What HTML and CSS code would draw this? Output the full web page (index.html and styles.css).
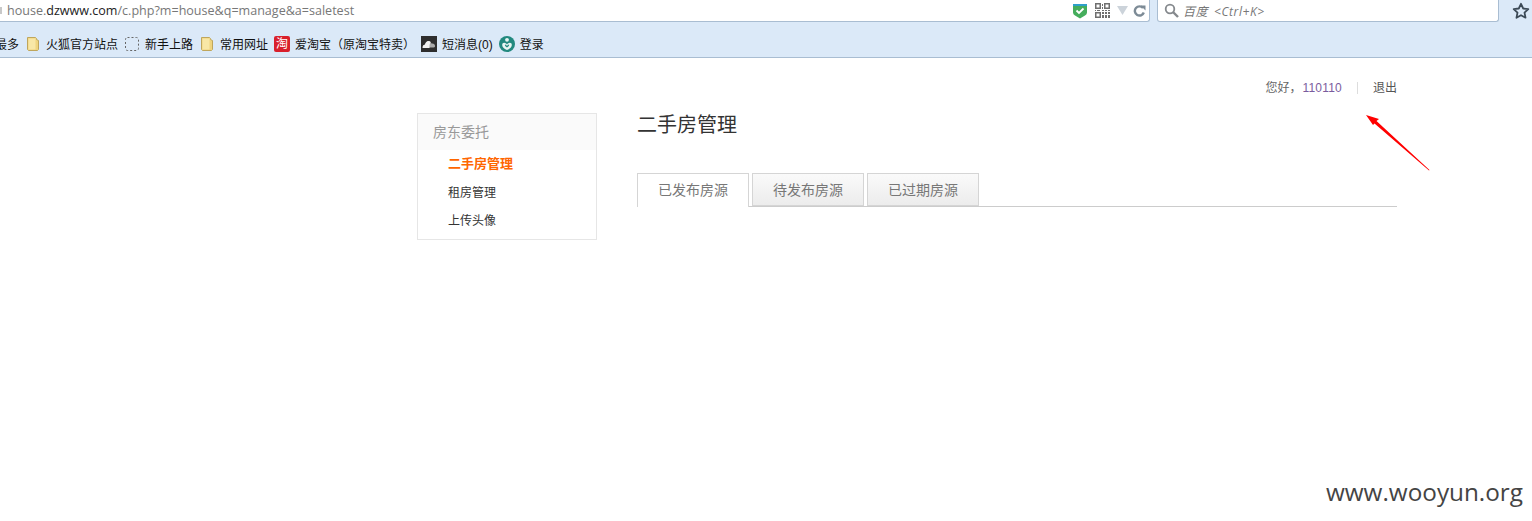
FILE: index.html
```html
<!DOCTYPE HTML>
<html lang="en">
  <head>
    <title>二手房管理</title>
    <meta charset="utf-8">
    <link rel="stylesheet" href="styles.css">
  </head>
  <body>

  <div id="browser">
    <div class="nav-row">
      <div class="url-box">
        <span class="url-clip"></span>
        <span class="url-text">house.<b>dzwww.com</b>/c.php?m=house&amp;q=manage&amp;a=saletest</span>
        <svg class="ico-shield" width="14" height="16" viewBox="0 0 14 16"><path d="M0 1h14v8.500q0 2-2 3L7 15.500 2 12.500q-2-1-2-3z" fill="#45ad5c"/><path d="M0 1h14v2H0z" fill="#2e9fc9"/><path d="M3.500 7.500L6 10l4.500-4.500" fill="none" stroke="#fff" stroke-width="1.800"/></svg>
        <svg class="ico-qr" width="15" height="15" viewBox="0 0 15 15" fill="#6f6f6f"><path d="M0 0h6v6H0zM1.500 1.500v3h3v-3zM9 0h6v6H9zM10.500 1.500v3h3v-3zM0 9h6v6H0zM1.500 10.500v3h3v-3z" fill-rule="evenodd"/><path d="M7 1h1v2H7zM7 4h1v2H7zM7 7h2v1H7zM0 7h1v1H0zM2 7h3v1H2zM10 7h2v1h-2zM13 7h2v1h-2zM7 9h2v2H7zM10 9h2v2h-2zM13 9h2v2h-2zM7 12h2v3H7zM10 12h2v3h-2zM13 12h2v3h-2z"/></svg>
        <svg class="ico-drop" width="11" height="9" viewBox="0 0 11 9"><path d="M0 0h11L5.500 9z" fill="#ccd3da"/></svg>
        <svg class="ico-reload" width="13" height="13" viewBox="0 0 13 13"><path d="M10 4A4.600 4.600 0 1 0 10.800 8.500" fill="none" stroke="#7d8b96" stroke-width="2.400"/><path d="M7.500 1.500h5v5z" fill="#7d8b96"/></svg>
      </div>
      <div class="search-box">
        <svg width="15" height="15" viewBox="0 0 15 15"><circle cx="6" cy="6" r="4.300" fill="none" stroke="#85898d" stroke-width="1.800"/><path d="M9 9l5 5" stroke="#85898d" stroke-width="2.400"/></svg>
        <span class="search-hint">百度 &lt;Ctrl+K&gt;</span>
      </div>
      <svg class="ico-star" width="18" height="18" viewBox="0 0 18 18"><path d="M9 1.800l2.200 4.700 5.100.6-3.800 3.500 1 5.100L9 13.200l-4.500 2.500 1-5.100L1.700 7.100l5.100-.6z" fill="none" stroke="#3c4a57" stroke-width="1.800" stroke-linejoin="round"/></svg>
    </div>
    <div class="bookmarks">
      <span class="bm">最多</span>
      <span class="bm"><svg width="16" height="16" viewBox="0 0 16 16"><path d="M2.500 1.500h8l1 1v1l2 1v9l-1 1h-9l-1-1z" fill="#efd47e" stroke="#bfa65c"/><path d="M3.500 2.500h7v11h-7z" fill="#f8e7a6"/></svg>火狐官方站点</span>
      <span class="bm"><svg width="16" height="16" viewBox="0 0 16 16"><rect x="1.500" y="1.500" width="13" height="13" rx="2" fill="none" stroke="#666" stroke-dasharray="2 2"/></svg>新手上路</span>
      <span class="bm"><svg width="16" height="16" viewBox="0 0 16 16"><path d="M2.500 1.500h8l1 1v1l2 1v9l-1 1h-9l-1-1z" fill="#efd47e" stroke="#bfa65c"/><path d="M3.500 2.500h7v11h-7z" fill="#f8e7a6"/></svg>常用网址</span>
      <span class="bm"><span class="ico-tao">淘</span>爱淘宝（原淘宝特卖）</span>
      <span class="bm"><svg width="16" height="16" viewBox="0 0 16 16"><rect width="16" height="16" fill="#2e2e2e"/><path d="M1.500 11.500q0-2.500 2.500-3 1-3.500 3.500-3.500 2.500 0 3 2.500 3-.5 3.500 2t-2 2H3q-1.500 0-1.500-.5z" fill="#aaa"/><path d="M1.500 11.500q0-2.500 2.500-3 1-3.500 3.500-3.500 1.500 0 2 1-1.500 3-1 6H3q-1.500 0-1.500-.5z" fill="#f2f2f2"/></svg>短消息(0)</span>
      <span class="bm"><svg width="16" height="16" viewBox="0 0 16 16"><circle cx="8" cy="8" r="8" fill="#22897f"/><circle cx="8" cy="3.800" r="1.900" fill="#e8f6f3"/><path d="M8 14C4 12.500 2.500 10 3.500 7.500 5 6 7 7 8 8.500 9 7 11 6 12.500 7.500 13.500 10 12 12.500 8 14z" fill="#e8f6f3"/><path d="M8 11.500C6.500 10.500 5.500 9.500 6 8.500 7 8.500 7.500 9.500 8 10 8.500 9.500 9 8.500 10 8.500 10.500 9.500 9.500 10.500 8 11.500z" fill="#22897f"/></svg>登录</span>
    </div>
  </div>

  <div id="page">
    <div class="userbar">
      <span>您好，<a class="uname" href="#">110110</a></span>
      <span class="sep"></span>
      <a href="#">退出</a>
    </div>
    <div class="main">
      <div class="side">
        <h3>房东委托</h3>
        <ul>
          <li class="on">二手房管理</li>
          <li>租房管理</li>
          <li>上传头像</li>
        </ul>
      </div>
      <div class="content">
        <h2>二手房管理</h2>
        <div class="tabs">
          <span class="tab active">已发布房源</span>
          <span class="tab">待发布房源</span>
          <span class="tab">已过期房源</span>
        </div>
      </div>
    </div>
    <svg class="arrow" width="66" height="60" viewBox="0 0 66 60"><path d="M0 1L13 5 10.500 7 63.500 56 63 56.500 8.500 9.500 7 11z" fill="#f00"/></svg>
  </div>

  <div id="mark">www.wooyun.org</div>

  </body>
</html>
```

FILE: styles.css
```css
html {
  height: 100%;
}
body {
  margin: 0;
  padding: 0;
  height: 100%;
  overflow: hidden;
  background: #fff;
  color: #333;
  font-family: "Liberation Sans", "Noto Sans CJK SC", sans-serif;
  font-size: 12px;
  position: relative;
}
a {
  color: #555;
  text-decoration: none;
}

#browser {
  background: #dbe9f8;
  border-bottom: 1px solid #a9bdd2;
  height: 57px;
}
.nav-row {
  display: flex;
  align-items: flex-start;
  height: 23px;
}
.url-box {
  width: 1150px;
  height: 22px;
  box-sizing: border-box;
  padding: 0 3px 0 0;
  background: #fff;
  border: 1px solid #a9bdd2;
  border-width: 0 1px 1px 0;
  border-radius: 0 0 3px 0;
  display: flex;
  align-items: center;
}
.url-clip {
  width: 2px;
  height: 7px;
  margin-right: 5px;
  background: #c8c8c8;
}
.url-text {
  flex: 1;
  font-family: "Open Sans", sans-serif;
  font-size: 12.55px;
  color: #777;
}
.url-text b {
  font-weight: normal;
  color: #222;
}
.ico-shield {
  margin-right: 8px;
}
.ico-qr {
  margin-right: 7px;
}
.ico-drop {
  margin-right: 5px;
}
.search-box {
  width: 342px;
  height: 22px;
  box-sizing: border-box;
  margin-left: 7px;
  padding-left: 6px;
  background: #fff;
  border: 1px solid #a9bdd2;
  border-width: 0 1px 1px 1px;
  border-radius: 0 0 3px 3px;
  display: flex;
  align-items: center;
  gap: 4px;
}
.search-hint {
  font-family: "Open Sans", "Noto Sans CJK SC", sans-serif;
  font-style: italic;
  font-size: 12px;
  word-spacing: 2px;
  letter-spacing: .6px;
  color: #777;
}
.ico-star {
  margin: 2px 0 0 13px;
}

.bookmarks {
  display: flex;
  align-items: center;
  height: 34px;
  box-sizing: border-box;
  padding-top: 7px;
  margin-left: -5px;
  color: #111;
}
.bm {
  display: flex;
  align-items: center;
  gap: 5px;
  margin-right: 6px;
  white-space: nowrap;
}
.ico-tao {
  width: 16px;
  height: 16px;
  border-radius: 2px;
  background: #d9202c;
  color: #fff;
  font-size: 12px;
  line-height: 16px;
  text-align: center;
}

#page {
  position: relative;
}
.userbar {
  display: flex;
  justify-content: flex-end;
  align-items: center;
  height: 55px;
  padding: 22px 135px 17px 0;
  box-sizing: border-box;
  color: #666;
  line-height: 16px;
}
.uname {
  margin-left: 1px;
  letter-spacing: .2px;
  color: #7a5c9e;
}
.sep {
  width: 1px;
  height: 12px;
  background: #ddd;
  margin: 0 15px;
}
.main {
  display: flex;
  margin-left: 417px;
  width: 980px;
}
.side {
  width: 180px;
  height: 127px;
  box-sizing: border-box;
  border: 1px solid #e6e6e6;
  flex-shrink: 0;
}
.side h3 {
  margin: 0;
  height: 36px;
  line-height: 36px;
  padding-left: 15px;
  font-size: 14px;
  font-weight: normal;
  color: #999;
  background: #fafafa;
}
.side ul {
  margin: 0;
  padding: 0 0 0 30px;
  list-style: none;
}
.side li {
  height: 28px;
  line-height: 28px;
  color: #333;
}
.side li.on {
  margin-bottom: 1px;
  color: #f60;
  font-size: 13px;
  font-weight: bold;
}
.content {
  flex: 1;
  margin-left: 40px;
}
.content h2 {
  margin: 0;
  font-size: 20px;
  font-weight: normal;
  line-height: 24px;
  color: #333;
}
.tabs {
  display: flex;
  margin-top: 36px;
  height: 33px;
  border-bottom: 1px solid #ccc;
}
.tab {
  width: 112px;
  height: 33px;
  box-sizing: border-box;
  margin-right: 3px;
  border: 1px solid #d5d5d5;
  background: linear-gradient(#fafafa, #ececec);
  text-align: center;
  line-height: 33px;
  font-size: 14px;
  color: #777;
}
.tab.active {
  height: 34px;
  background: #fff;
  border-bottom: 0;
}
.arrow {
  position: absolute;
  left: 1366px;
  top: 56px;
}

#mark {
  position: absolute;
  right: 9px;
  bottom: 13px;
  font-family: "Open Sans", sans-serif;
  font-size: 24.3px;
  color: #444;
}
```
